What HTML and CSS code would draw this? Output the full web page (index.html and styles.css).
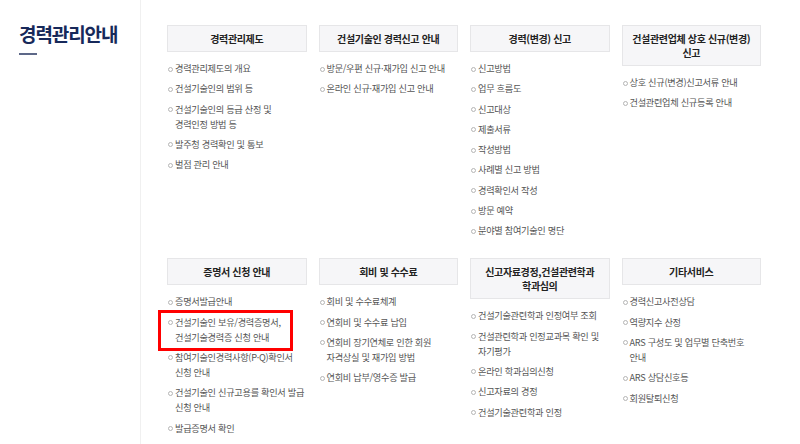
FILE: index.html
```html
<!DOCTYPE html>
<html lang="ko">
<head>
  <meta charset="UTF-8" />
  <meta name="viewport" content="width=device-width, initial-scale=1.0"/>
  <title>경력관리안내</title>
  <link rel="stylesheet" href="styles.css">
</head>
<body>

  <div class="page">
    <aside class="side">
      <h2 class="side-title">경력관리안내</h2>
      <span class="side-bar"></span>
    </aside>

    <main class="menu">
      <section class="group">
        <h3 class="group-title">경력관리제도</h3>
        <ul class="links">
          <li>경력관리제도의 개요</li>
          <li>건설기술인의 범위 등</li>
          <li>건설기술인의 등급 산정 및<br>경력인정 방법 등</li>
          <li>발주청 경력확인 및 통보</li>
          <li>벌점 관리 안내</li>
        </ul>
      </section>

      <section class="group">
        <h3 class="group-title">건설기술인 경력신고 안내</h3>
        <ul class="links">
          <li>방문/우편 신규·재가입 신고 안내</li>
          <li>온라인 신규·재가입 신고 안내</li>
        </ul>
      </section>

      <section class="group">
        <h3 class="group-title">경력(변경) 신고</h3>
        <ul class="links">
          <li>신고방법</li>
          <li>업무 흐름도</li>
          <li>신고대상</li>
          <li>제출서류</li>
          <li>작성방법</li>
          <li>사례별 신고 방법</li>
          <li>경력확인서 작성</li>
          <li>방문 예약</li>
          <li>분야별 참여기술인 명단</li>
        </ul>
      </section>

      <section class="group">
        <h3 class="group-title">건설관련업체 상호 신규(변경)<br>신고</h3>
        <ul class="links">
          <li>상호 신규(변경)신고서류 안내</li>
          <li>건설관련업체 신규등록 안내</li>
        </ul>
      </section>

      <section class="group">
        <h3 class="group-title">증명서 신청 안내</h3>
        <ul class="links">
          <li>증명서발급안내</li>
          <li class="picked">건설기술인 보유/경력증명서,<br>건설기술경력증 신청 안내</li>
          <li>참여기술인경력사항(P·Q)확인서<br>신청 안내</li>
          <li>건설기술인 신규고용를 확인서 발급<br>신청 안내</li>
          <li>발급증명서 확인</li>
        </ul>
      </section>

      <section class="group">
        <h3 class="group-title">회비 및 수수료</h3>
        <ul class="links">
          <li>회비 및 수수료체계</li>
          <li>연회비 및 수수료 납입</li>
          <li>연회비 장기연체로 인한 회원<br>자격상실 및 재가입 방법</li>
          <li>연회비 납부/영수증 발급</li>
        </ul>
      </section>

      <section class="group">
        <h3 class="group-title">신고자료경정,건설관련학과<br>학과심의</h3>
        <ul class="links">
          <li>건설기술관련학과 인정여부 조회</li>
          <li>건설관련학과 인정교과목 확인 및<br>자기평가</li>
          <li>온라인 학과심의신청</li>
          <li>신고자료의 경정</li>
          <li>건설기술관련학과 인정</li>
        </ul>
      </section>

      <section class="group">
        <h3 class="group-title">기타서비스</h3>
        <ul class="links">
          <li>경력신고사전상담</li>
          <li>역량지수 산정</li>
          <li>ARS 구성도 및 업무별 단축번호<br>안내</li>
          <li>ARS 상담신호등</li>
          <li>회원탈퇴신청</li>
        </ul>
      </section>
    </main>
  </div>

</body>
</html>
```

FILE: styles.css
```css
html, body {
  height: 100%;
}

body {
  margin: 0;
  background: #fff;
  font-family: "Noto Sans CJK KR", "Noto Sans", sans-serif;
  color: #555;
  overflow: hidden;
}

.page {
  display: flex;
  height: 100%;
}

/* left title column */
.side {
  box-sizing: border-box;
  width: 141px;
  flex: none;
  padding: 21px 0 0 19px;
  border-right: 1px solid #f0f0f0;
}

.side-title {
  margin: 0;
  font-size: 19px;
  line-height: 25px;
  font-weight: 700;
  letter-spacing: -1.1px;
  color: #17295a;
}

.side-bar {
  display: block;
  width: 18px;
  height: 1.5px;
  margin-top: 7px;
  background: #5d6888;
}

/* menu grid */
.menu {
  display: grid;
  grid-template-columns: repeat(4, 139.5px);
  column-gap: 12px;
  row-gap: 20px;
  align-items: start;
  align-content: start;
  padding: 25px 0 0 26px;
}

.group-title {
  margin: 0;
  padding: 6px 4px 5px;
  border: 1px solid #e6e6e8;
  background: #f6f6f8;
  font-size: 10px;
  line-height: 14px;
  font-weight: 700;
  letter-spacing: -0.35px;
  text-align: center;
  white-space: nowrap;
  color: #222;
}

.links {
  list-style: none;
  margin: 9px 0 0;
  padding: 0;
  display: flex;
  flex-direction: column;
  gap: 5.3px;
}

.links li {
  position: relative;
  padding-left: 8px;
  font-size: 9.2px;
  line-height: 15px;
  letter-spacing: -0.3px;
  white-space: nowrap;
  color: #555;
}

.links li::before {
  content: "";
  position: absolute;
  left: 1px;
  top: 5.5px;
  width: 3px;
  height: 3px;
  border: 1px solid #b5b5b5;
  border-radius: 50%;
}

/* red annotation box */
.links li.picked::after {
  content: "";
  position: absolute;
  left: -9px;
  top: -4.5px;
  box-sizing: border-box;
  width: 135px;
  height: 41px;
  border: 3px solid #f00;
}
```
